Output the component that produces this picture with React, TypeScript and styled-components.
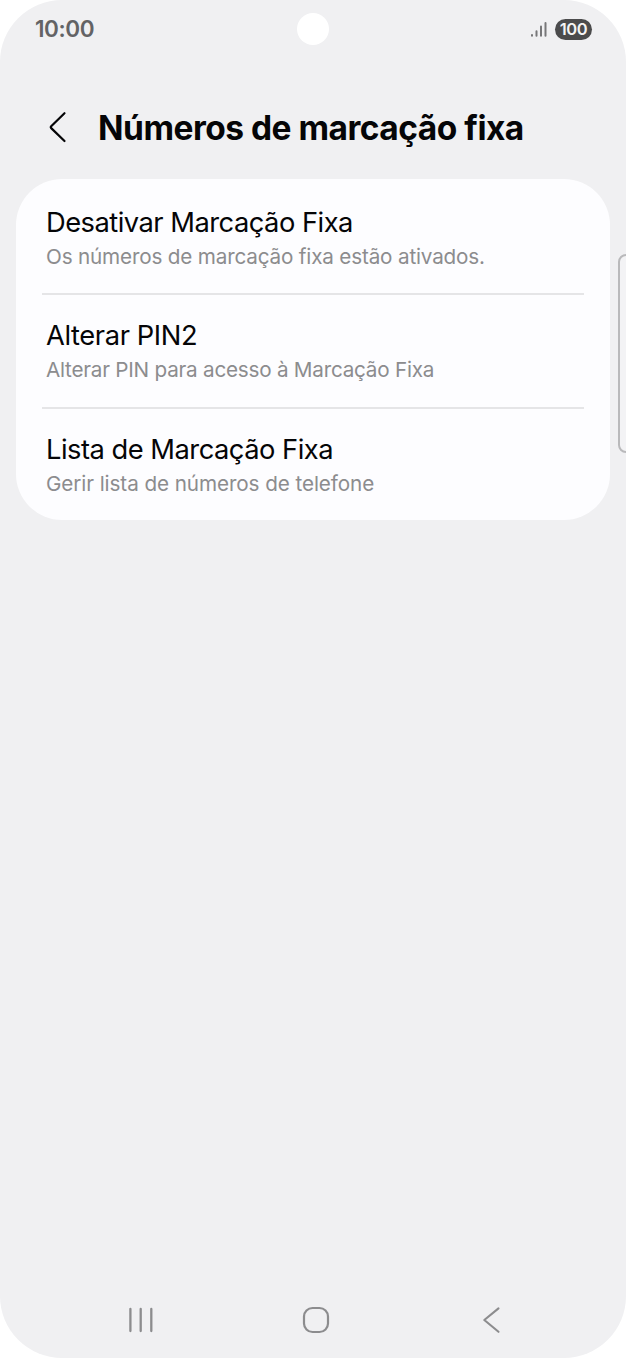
import React from "react";
import styled, { createGlobalStyle } from "styled-components";

const GlobalStyle = createGlobalStyle`
  * { box-sizing: border-box; }
  body { margin: 0; background: #fff; }
`;

const Screen = styled.div`
  position: relative;
  display: flex;
  flex-direction: column;
  width: 626px;
  height: 1358px;
  overflow: hidden;
  border-radius: 62px;
  background: #f0f0f2;
  color: #050507;
  font-family: Inter, "Liberation Sans", sans-serif;
`;

const StatusBar = styled.header`
  display: grid;
  grid-template-columns: 1fr 32px 1fr;
  align-items: center;
  height: 58px;
  padding: 0 34px;
`;

const Text = styled.span<{ $track: number }>`
  letter-spacing: ${(p) => p.$track}px;
  white-space: nowrap;
`;

const Clock = styled(Text)`
  padding: 0 0 0 1px;
  font-size: 22.5px;
  font-weight: 600;
  line-height: 28px;
  color: #636365;
`;

const Camera = styled.div`
  width: 32px;
  height: 32px;
  border-radius: 50%;
  background: #fff;
`;

const StatusIcons = styled.div`
  display: flex;
  justify-content: flex-end;
  align-items: center;
  gap: 7px;
`;

const Battery = styled.div`
  display: flex;
  align-items: center;
  justify-content: center;
  width: 37px;
  height: 21px;
  border-radius: 11px;
  background: #4b4b4c;
  color: #f4f4f4;
  font-size: 16.5px;
  font-weight: 600;
  letter-spacing: -0.4px;
`;

const TitleBar = styled.div`
  display: flex;
  align-items: center;
  gap: 30px;
  height: 121px;
  padding: 36px 0 19px 48px;
`;

const Heading = styled.h1`
  margin: 0;
  padding-top: 2px;
  font-size: 33.5px;
  font-weight: 700;
  line-height: 44px;
  letter-spacing: -0.5px;
  white-space: nowrap;
`;

const Card = styled.main`
  width: 593.5px;
  height: 341px;
  margin: 0 16px;
  padding: 1px 26px 0;
  border-radius: 46px;
  background: #fdfdff;
`;

const Row = styled.section`
  display: flex;
  flex-direction: column;
  height: 114px;
  padding: 25px 4px 0;

  & + & {
    padding-top: 24px;
    box-shadow: 0 -1px 0 #e5e5e7, inset 0 1px 0 #e5e5e7;
  }
`;

const RowTitle = styled(Text)`
  font-size: 27.3px;
  line-height: 36px;
`;

const RowNote = styled(Text)`
  font-size: 20.7px;
  line-height: 32px;
  color: #8c8c8e;
`;

const EdgeHandle = styled.div`
  position: absolute;
  left: 618px;
  top: 254px;
  width: 20px;
  height: 199px;
  border: 2px solid #b9b9bb;
  border-radius: 8px;
  background: #f3f3f5;
`;

const NavBar = styled.nav`
  display: grid;
  grid-template-columns: 174px 180px 18px;
  align-items: center;
  margin-top: auto;
  height: 76px;
  padding-left: 128px;
`;

const rows = [
  { title: "Desativar Marcação Fixa", titleTrack: -0.51, note: "Os números de marcação fixa estão ativados.", noteTrack: -0.18 },
  { title: "Alterar PIN2", titleTrack: -0.4, note: "Alterar PIN para acesso à Marcação Fixa", noteTrack: -0.24 },
  { title: "Lista de Marcação Fixa", titleTrack: -0.5, note: "Gerir lista de números de telefone", noteTrack: -0.09 },
];

export default function App() {
  return (
    <>
      <GlobalStyle />
      <Screen>
        <StatusBar>
          <Clock $track={-0.4}>10:00</Clock>
          <Camera />
          <StatusIcons>
            <svg width="18" height="18" viewBox="0 0 18 18" stroke="#777779" strokeWidth="2" strokeLinecap="round">
              <path d="M2 14.9v.9M6.5 11.2v4.6M11 6.5v9.3M15.5 3v12.8" />
            </svg>
            <Battery>100</Battery>
          </StatusIcons>
        </StatusBar>
        <TitleBar>
          <svg width="20" height="34" viewBox="0 0 20 34" fill="none" stroke="#050507" strokeWidth="2.2" strokeLinecap="round" strokeLinejoin="round">
            <path d="M16.5 3.2L3.2 16.3q-.9.9 0 1.8L16.5 31" />
          </svg>
          <Heading>Números de marcação fixa</Heading>
        </TitleBar>
        <Card>
          {rows.map((r) => (
            <Row key={r.title}>
              <RowTitle $track={r.titleTrack}>{r.title}</RowTitle>
              <RowNote $track={r.noteTrack}>{r.note}</RowNote>
            </Row>
          ))}
        </Card>
        <EdgeHandle />
        <NavBar>
          <svg width="26" height="28" viewBox="0 0 26 28" stroke="#8c8c8e" strokeWidth="2.3" strokeLinecap="round">
            <path d="M2.4 3v22M12.7 3v22M23.3 3v22" />
          </svg>
          <svg width="28" height="28" viewBox="0 0 28 28" fill="none" stroke="#8c8c8e" strokeWidth="2.2">
            <rect x="2" y="2" width="24" height="24" rx="8.5" />
          </svg>
          <svg width="18" height="28" viewBox="0 0 18 28" fill="none" stroke="#8c8c8e" strokeWidth="2.1" strokeLinecap="round" strokeLinejoin="round">
            <path d="M16.5 2.4L2.3 14l14.2 11.8" />
          </svg>
        </NavBar>
      </Screen>
    </>
  );
}
